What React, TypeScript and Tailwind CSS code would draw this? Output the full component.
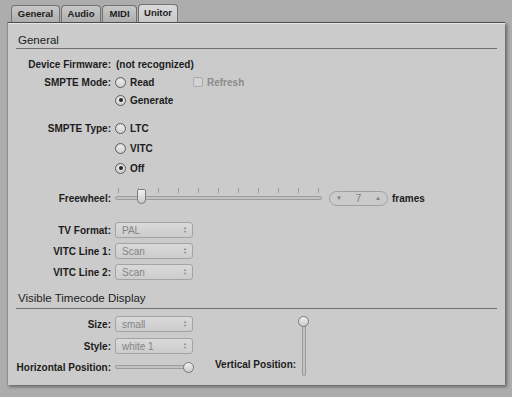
import React from "react";

const Radio = ({ checked }: { checked?: boolean }) => (
  <span className="flex h-[11px] w-[11px] shrink-0 items-center justify-center rounded-full border border-[#5e5e5e] bg-gradient-to-b from-[#f2f2f2] to-[#cfcfcf] shadow-[inset_0_1px_1px_rgba(0,0,0,0.15)]">
    {checked && <span className="h-[4px] w-[4px] rounded-full bg-[#262626]" />}
  </span>
);

const Row = ({ label, className, children }: { label?: string; className: string; children?: React.ReactNode }) => (
  <div className={"flex items-center " + className}>
    <span className="w-[103px] shrink-0 text-right font-bold">{label}</span>
    <div className="ml-[4px] flex items-center">{children}</div>
  </div>
);

const RadioItem = ({ text, checked }: { text: string; checked?: boolean }) => (
  <span className="flex items-center gap-[4px] font-bold">
    <Radio checked={checked} />
    {text}
  </span>
);

const Popup = ({ value }: { value: string }) => (
  <div className="flex h-[16px] w-[78px] items-center justify-between rounded-[3px] border border-[#a3a3a3] bg-gradient-to-b from-[#d9d9d9] to-[#cdcdcd] pl-[6px] pr-[5px] text-[#848484]">
    <span>{value}</span>
    <span className="flex flex-col text-[4px] leading-[4px] text-[#8a8a8a]">
      <span>▲</span>
      <span>▼</span>
    </span>
  </div>
);

const Knob = () => (
  <span className="block h-[11px] w-[11px] rounded-full border border-[#7a7a7a] bg-gradient-to-b from-[#f0f0f0] to-[#cacaca]" />
);

const ticks = [0, 1, 2, 3, 4, 5, 6, 7, 8, 9, 10];

export default function App() {
  return (
    <div className="h-[397px] w-[512px] overflow-hidden bg-[#adadad] font-['Liberation_Sans',Arial,sans-serif] text-[10px] text-[#1c1c1c]">
      {/* tabs */}
      <div className="flex h-[22px] items-end gap-[1px] pl-[11px]">
        {[
          ["General", "w-[49px]"],
          ["Audio", "w-[40px]"],
          ["MIDI", "w-[35px]"],
        ].map(([t, w]) => (
          <div
            key={t}
            className={
              w +
              " flex h-[17px] items-center justify-center rounded-t-[4px] border border-b-0 border-[#727272] bg-gradient-to-b from-[#c8c8c8] to-[#aeaeae] text-[9.5px] font-bold"
            }
          >
            {t}
          </div>
        ))}
        <div className="flex h-[18px] w-[40px] items-center justify-center rounded-t-[4px] border border-b-0 border-[#727272] bg-gradient-to-b from-[#dadada] to-[#c9c9c9] text-[9.5px] font-bold">
          Unitor
        </div>
      </div>

      {/* panel */}
      <div className="ml-[7px] h-[363px] w-[498px] border-l border-t border-[#4d4d4d] border-l-[#8f8f8f] bg-[#cbcbcb] shadow-[inset_0_1px_0_#e6e6e6,2px_2px_3px_rgba(0,0,0,0.4)]">
        <div className="mx-[8px] mt-[10px] border-b border-[#6e6e6e] pb-[1px] pl-[2px] text-[11.5px] leading-[14px]">General</div>

        <Row label="Device Firmware:" className="mt-[6px] h-[18px]">
          <span className="ml-[1px] font-bold">(not recognized)</span>
        </Row>
        <Row label="SMPTE Mode:" className="h-[18px]">
          <span className="w-[78px]">
            <RadioItem text="Read" />
          </span>
          <span className="flex items-center gap-[4px] font-bold text-[#8c8c8c]">
            <span className="h-[10px] w-[10px] rounded-[2px] border border-[#ababab] bg-[#d3d3d3]" />
            Refresh
          </span>
        </Row>
        <Row className="h-[18px]">
          <RadioItem text="Generate" checked />
        </Row>
        <Row label="SMPTE Type:" className="mt-[10px] h-[18px]">
          <RadioItem text="LTC" />
        </Row>
        <Row className="mt-[2px] h-[18px]">
          <RadioItem text="VITC" />
        </Row>
        <Row className="mt-[2px] h-[18px]">
          <RadioItem text="Off" checked />
        </Row>

        <Row label="Freewheel:" className="mt-[9px] h-[24px]">
          <div className="relative h-[24px] w-[207px]">
            <div className="flex justify-between px-[3px] pt-[2px]">
              {ticks.map((t) => (
                <span key={t} className="h-[5px] w-[1px] bg-[#9a9a9a]" />
              ))}
            </div>
            <div className="mt-[3px] h-[4px] w-full rounded-full border border-[#9c9c9c] bg-[#c2c2c2]" />
            <span className="absolute left-[22px] top-[3px] h-[15px] w-[9px] rounded-b-[5px] rounded-t-[2px] border border-[#7a7a7a] bg-gradient-to-b from-[#f0f0f0] to-[#cacaca]" />
          </div>
          <div className="ml-[7px] flex h-[15px] w-[59px] items-center justify-between rounded-full border border-[#a0a0a0] px-[6px] text-[#7c7c7c]">
            <span className="text-[6px]">▼</span>
            <span className="text-[10px]">7</span>
            <span className="text-[6px]">▲</span>
          </div>
          <span className="ml-[4px] font-bold">frames</span>
        </Row>

        <Row label="TV Format:" className="mt-[11px] h-[18px]">
          <Popup value="PAL" />
        </Row>
        <Row label="VITC Line 1:" className="mt-[3px] h-[18px]">
          <Popup value="Scan" />
        </Row>
        <Row label="VITC Line 2:" className="mt-[3px] h-[18px]">
          <Popup value="Scan" />
        </Row>

        <div className="mx-[8px] mt-[10px] border-b border-[#6e6e6e] pb-[3px] pl-[2px] text-[11.5px] leading-[14px]">
          Visible Timecode Display
        </div>

        <div className="flex">
          <div className="w-[186px]">
            <Row label="Size:" className="mt-[6px] h-[18px]">
              <Popup value="small" />
            </Row>
            <Row label="Style:" className="mt-[4px] h-[18px]">
              <Popup value="white 1" />
            </Row>
            <Row label="Horizontal Position:" className="mt-[3px] h-[18px]">
              <div className="relative flex h-[18px] w-[79px] items-center">
                <div className="h-[4px] w-full rounded-full border border-[#9c9c9c] bg-[#c2c2c2]" />
                <span className="absolute right-0 top-[4px]">
                  <Knob />
                </span>
              </div>
            </Row>
          </div>
          <div className="ml-[21px] flex items-end">
            <span className="mb-[4px] font-bold">Vertical Position:</span>
            <div className="relative ml-[2px] mt-[6px] flex h-[60px] w-[11px] justify-center">
              <div className="mt-[3px] h-[57px] w-[4px] rounded-full border border-[#9c9c9c] bg-[#c2c2c2]" />
              <span className="absolute left-0 top-0">
                <Knob />
              </span>
            </div>
          </div>
        </div>
      </div>
    </div>
  );
}
